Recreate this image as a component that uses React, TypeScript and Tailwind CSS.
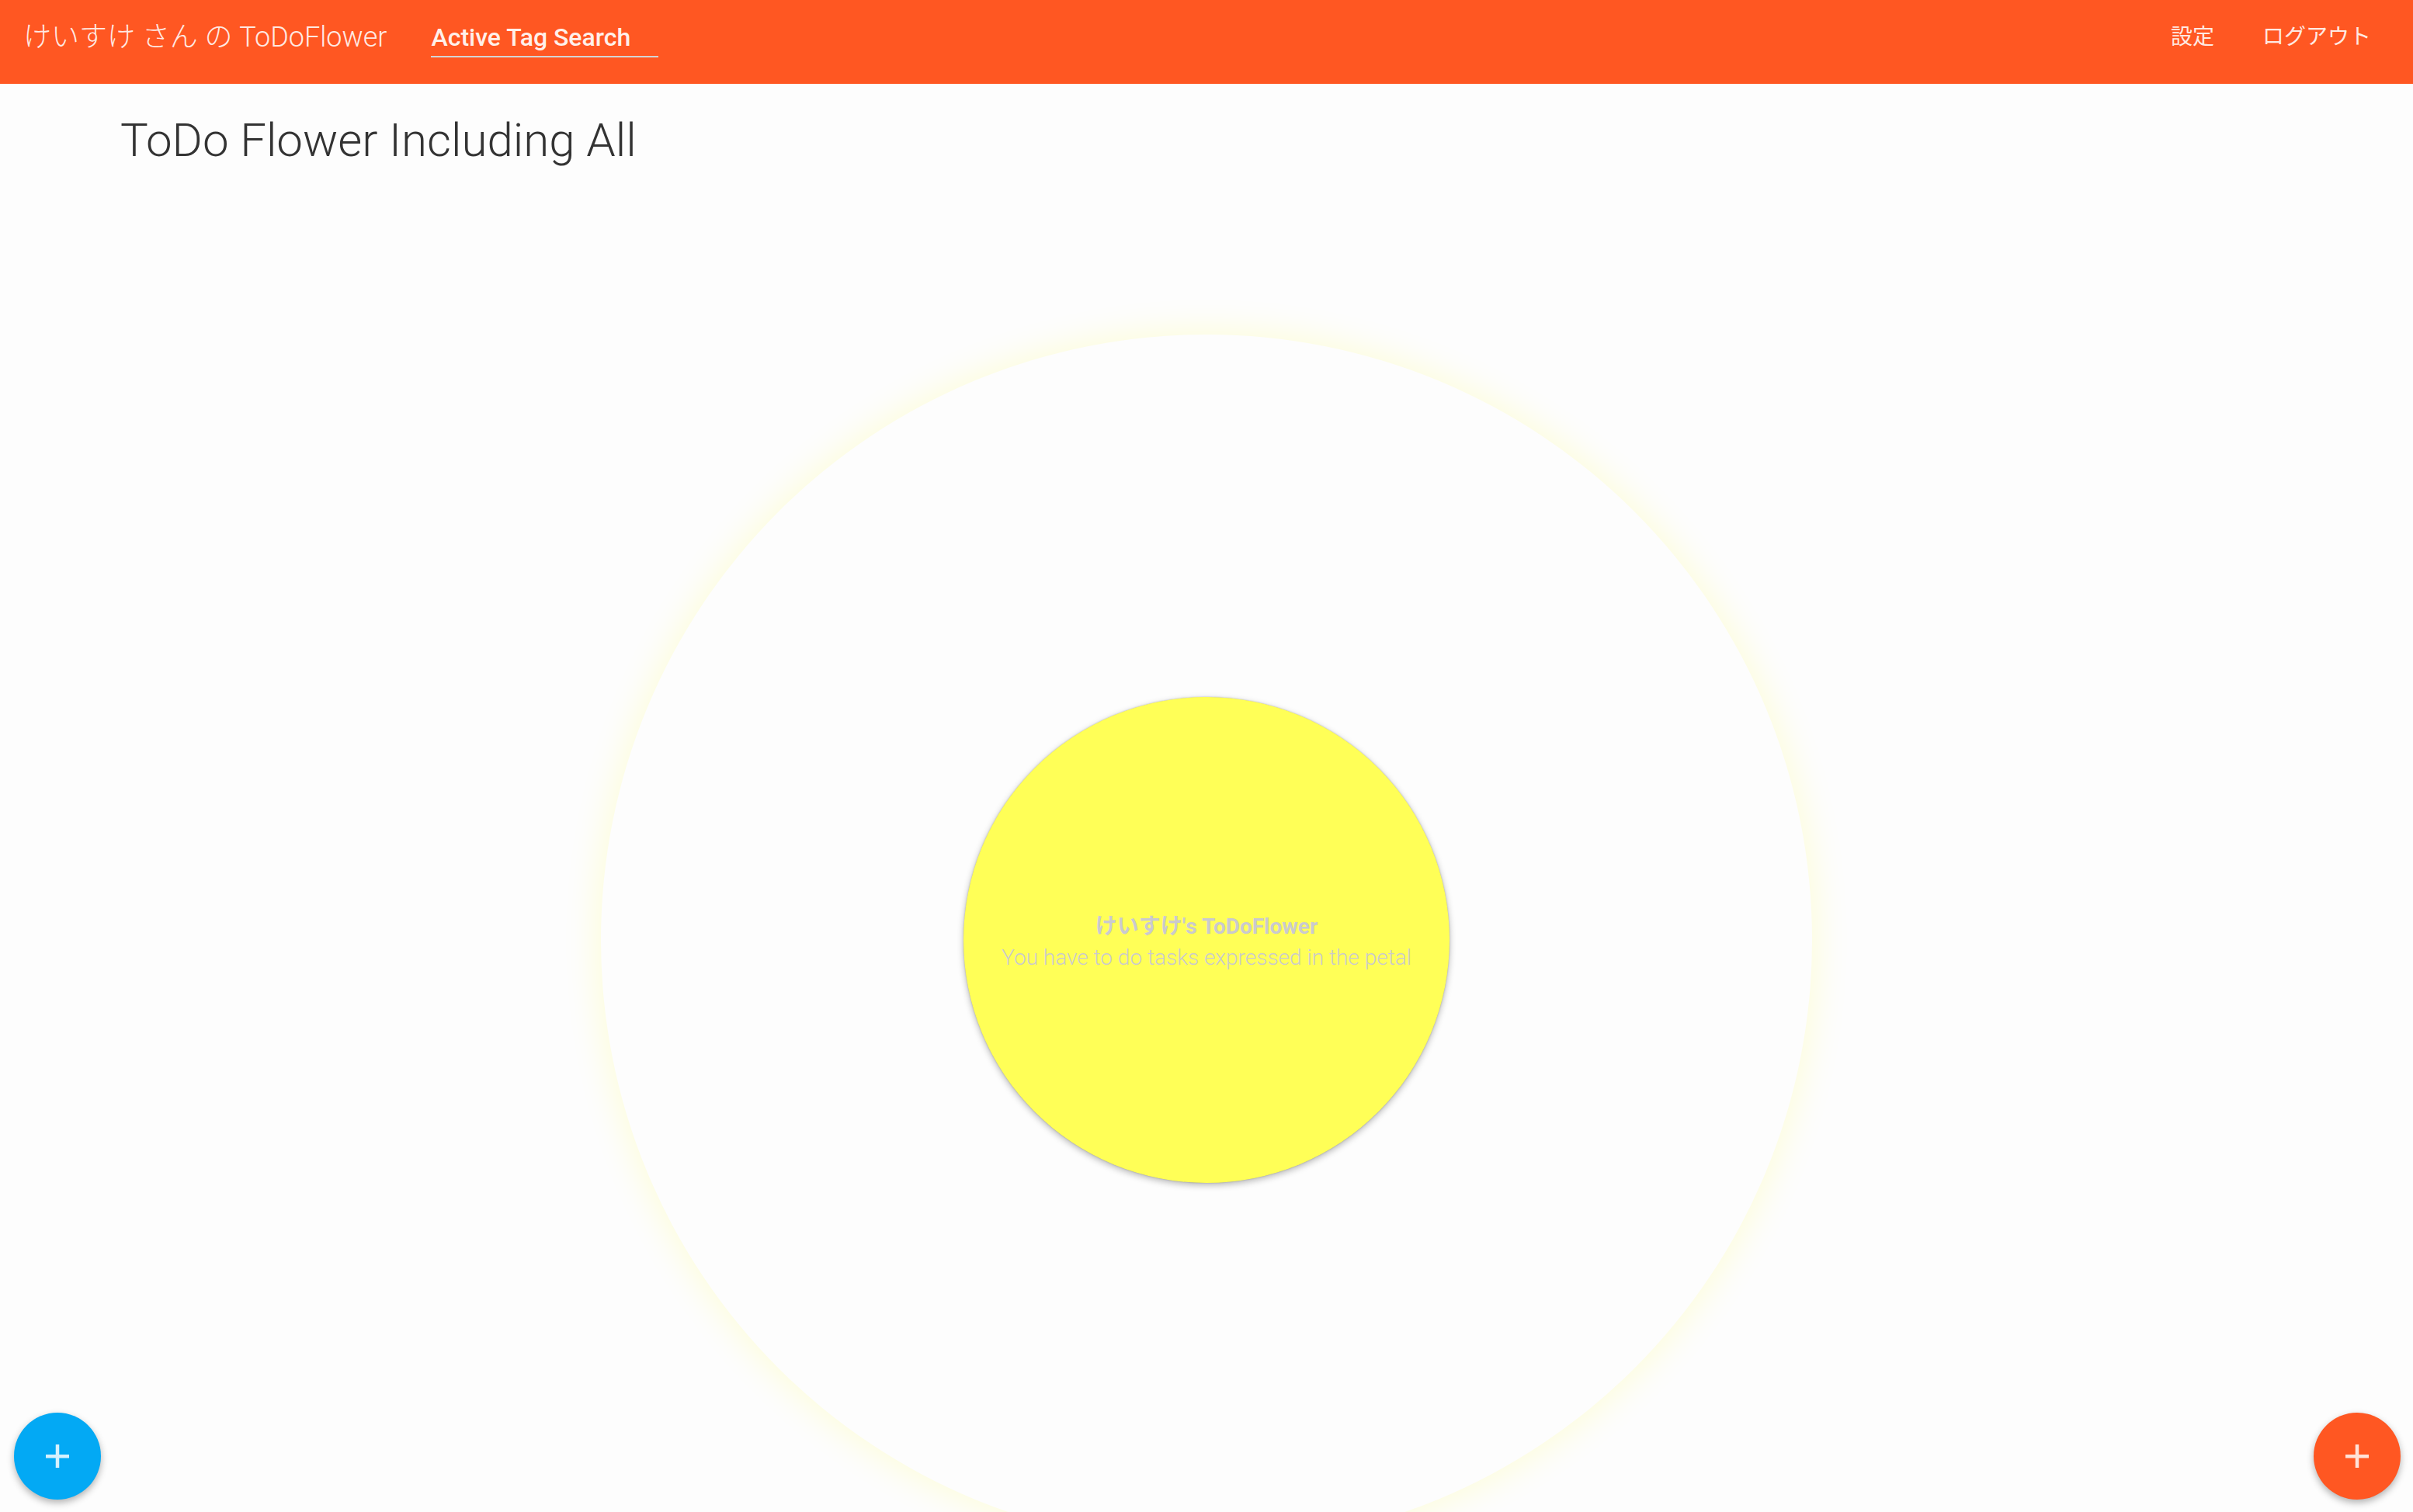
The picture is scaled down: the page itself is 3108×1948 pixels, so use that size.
import React from "react";

function PlusIcon({ color }: { color: string }) {
  return (
    <svg width="30" height="30" viewBox="0 0 30 30">
      <rect x="0" y="13" width="30" height="4.5" fill={color} />
      <rect x="12.75" y="0" width="4.5" height="30" fill={color} />
    </svg>
  );
}

export default function App() {
  return (
    <div className="relative h-[1948px] w-full overflow-hidden bg-[#fdfdfd] font-[Roboto,'Noto_Sans_CJK_JP',sans-serif]">
      <header className="flex h-[108px] items-start justify-between bg-[#ff5722] pt-[2px] text-[#ffe9e2]">
        <div className="flex items-start">
          <div className="pl-[30px] text-[36px] font-light leading-[92px]">
            けいすけ さん の ToDoFlower
          </div>
          <div className="ml-[57px] mt-[26px] w-[293px] border-b-2 border-[#d4d4d4] pb-[4px]">
            <div className="text-[32px] font-medium leading-[40px] text-[#fff0ea]">
              Active Tag Search
            </div>
          </div>
        </div>
        <nav className="flex h-[92px] items-center gap-[62px] pr-[54px] text-[28px]">
          <span>設定</span>
          <span>ログアウト</span>
        </nav>
      </header>

      <main className="flex flex-col">
        <h1 className="ml-[155px] mt-[40px] text-[60px] font-light leading-[66px] text-[#333333]">
          ToDo Flower Including All
        </h1>
        <div className="mt-[217px] flex justify-center">
          <div className="flex h-[1560px] w-[1560px] shrink-0 items-center justify-center rounded-full bg-[#fdfdfd] shadow-[0_0_40px_8px_rgba(255,255,0,0.13)]">
            <div className="flex h-[626px] w-[626px] flex-col items-center justify-center rounded-full bg-[#ffff57] pt-[6px] text-[#cacace] shadow-[0_3px_8px_rgba(0,0,0,0.28),0_0_2px_rgba(0,0,0,0.25)]">
              <div className="text-[28px] font-bold leading-[40px]">けいすけ's ToDoFlower</div>
              <div className="text-[28px] font-light leading-[40px]">
                You have to do tasks expressed in the petal
              </div>
            </div>
          </div>
        </div>
      </main>

      <button className="absolute bottom-[16px] left-[18px] flex h-[112px] w-[112px] items-center justify-center rounded-full bg-[#03a9f4] shadow-[0_4px_10px_rgba(0,0,0,0.3)]">
        <PlusIcon color="#d6f1fd" />
      </button>
      <button className="absolute bottom-[16px] right-[16px] flex h-[112px] w-[112px] items-center justify-center rounded-full bg-[#ff5722] shadow-[0_4px_10px_rgba(0,0,0,0.3)]">
        <PlusIcon color="#ffe2d8" />
      </button>
    </div>
  );
}
